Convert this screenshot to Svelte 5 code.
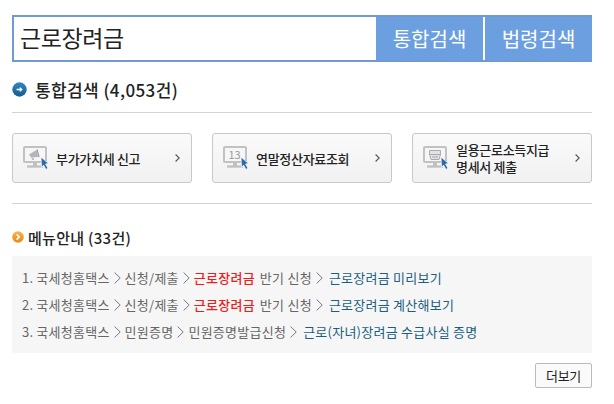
<script lang="ts">
	const shortcuts = [
		{ lines: ['부가가치세 신고'], icon: 'horn' },
		{ lines: ['연말정산자료조회'], icon: 'num' },
		{ lines: ['일용근로소득지급', '명세서 제출'], icon: 'print' }
	];

	const menus = [
		{ no: 1, path: ['국세청홈택스', '신청/제출'], hit: '근로장려금', rest: '반기 신청', link: '근로장려금 미리보기' },
		{ no: 2, path: ['국세청홈택스', '신청/제출'], hit: '근로장려금', rest: '반기 신청', link: '근로장려금 계산해보기' },
		{ no: 3, path: ['국세청홈택스', '민원증명', '민원증명발급신청'], hit: '', rest: '', link: '근로(자녀)장려금 수급사실 증명' }
	];
</script>

{#snippet sep()}
	<svg class="sep" width="7" height="12" viewBox="0 0 7 12">
		<path d="M.6.5L6.2 6 .6 11.5" fill="none" stroke="#777" stroke-width="1" />
	</svg>
{/snippet}

<div class="page">
	<div class="search">
		<div class="query">근로장려금</div>
		<button class="tab first">통합검색</button>
		<button class="tab">법령검색</button>
	</div>

	<h2 class="title">
		<svg width="15" height="15" viewBox="0 0 15 15">
			<defs>
				<linearGradient id="blue" x1="0" y1="0" x2="0" y2="1">
					<stop offset="0" stop-color="#2f88c4" />
					<stop offset="1" stop-color="#18598f" />
				</linearGradient>
			</defs>
			<circle cx="7.5" cy="7.5" r="7.2" fill="url(#blue)" />
			<path d="M4.6 7.5h5.2M7.8 5.6l2 1.9-2 1.9" fill="none" stroke="#fff" stroke-width="1.3" />
		</svg>
		통합검색 (4,053건)
	</h2>
	<hr />

	<div class="shortcuts">
		{#each shortcuts as s}
			<div class="shortcut">
				<svg class="monitor" width="27" height="24" viewBox="0 0 27 24">
					<rect x="1" y="1" width="22" height="15" rx="1" fill="#f6f6f6" stroke="#c2c2c2" stroke-width="2" />
					<path d="M12 17v3" stroke="#c2c2c2" stroke-width="4" fill="none" />
					<path d="M4 20.5h16" stroke="#c2c2c2" stroke-width="2.4" fill="none" />
					{#if s.icon === 'horn'}
						<path d="M6 8.5l7.5-4.5 1.5 7-7 .5z" fill="#b4b4b4" />
						<path d="M8.5 12l.8 2h1.8l-.8-2.2z" fill="#b4b4b4" />
						<path d="M14 3.5l2 7.5" stroke="#9c9c9c" stroke-width="1.2" />
					{:else if s.icon === 'num'}
						<text x="5.5" y="13" class="num">13</text>
					{:else}
						<path d="M6.5 4.5h11v4l-1.5 5h-8l-1.5-5z" fill="#e2e2e2" stroke="#ababab" />
						<path d="M6.5 8.5h11M9 11h6" stroke="#ababab" fill="none" />
					{/if}
					<path d="M18 11l7.6 6.6-3 .4 2.4 4.2-2 1.2-2.5-4.3-2 2.2z" fill="#2e6aa8" stroke="#fff" stroke-width="0.7" />
				</svg>
				<span class="label">
					{#each s.lines as line}<span class="line">{line}</span>{/each}
				</span>
				<svg class="chev" width="5" height="8" viewBox="0 0 5 8">
					<path d="M.6.5L4.2 4 .6 7.5" fill="none" stroke="#555" stroke-width="1.1" />
				</svg>
			</div>
		{/each}
	</div>
	<hr />

	<h3 class="subtitle">
		<svg width="12" height="12" viewBox="0 0 12 12">
			<defs>
				<linearGradient id="orange" x1="0" y1="0" x2="0" y2="1">
					<stop offset="0" stop-color="#f8b650" />
					<stop offset="1" stop-color="#e58a12" />
				</linearGradient>
			</defs>
			<circle cx="6" cy="6" r="5.8" fill="url(#orange)" />
			<path d="M4.6 3.4L7.2 6 4.6 8.6" fill="none" stroke="#fff" stroke-width="1.5" />
		</svg>
		메뉴안내 (33건)
	</h3>
	<ul class="menus">
		{#each menus as m}
			<li>
				<span class="no">{m.no}.</span>
				{#each m.path as p}<span>{p}</span>{@render sep()}{/each}
				{#if m.hit}<b>{m.hit}</b><span class="rest">{m.rest}</span>{@render sep()}{/if}
				<a href="#top">{m.link}</a>
			</li>
		{/each}
	</ul>

	<div class="more-row"><button class="more">더보기</button></div>
</div>

<style>
	:global(body) {
		margin: 0;
		background: #fff;
	}

	.page {
		box-sizing: border-box;
		width: 614px;
		height: 404px;
		padding: 15px 22px 0 12px;
		overflow: hidden;
		font-family: "Noto Sans CJK KR", "Noto Sans", sans-serif;
	}

	.search {
		display: flex;
		height: 47px;
		box-sizing: border-box;
		background: #6b9fe0;
		border: 2px solid #6f9bd0;
		border-right-color: #6b9fe0;
	}

	.query {
		width: 362px;
		box-sizing: border-box;
		background: #fff;
		padding-left: 6px;
		font-size: 23px;
		letter-spacing: -0.4px;
		line-height: 41px;
		color: #222;
	}

	.tab {
		flex: 1;
		padding: 0;
		border: 0;
		background: transparent;
		color: #fff;
		font: inherit;
		font-size: 20px;
		line-height: 42px;
	}

	.tab.first {
		flex: 0 0 107px;
	}

	.tab + .tab {
		padding-left: 2px;
		border-left: 2px solid #fff;
	}

	.title {
		display: flex;
		align-items: center;
		gap: 8px;
		margin: 14px 0 10px;
		height: 26px;
		font-size: 17px;
		font-weight: 500;
		letter-spacing: 0.4px;
		color: #222;
	}

	hr {
		margin: 0;
		border: 0;
		border-top: 1px solid #d3d3d3;
	}

	.shortcuts {
		display: flex;
		gap: 20px;
		margin: 20px 0;
	}

	.shortcut {
		flex: 1;
		display: flex;
		align-items: center;
		height: 50px;
		box-sizing: border-box;
		padding: 0 11px 0 10px;
		border: 1px solid #c8c8c8;
		border-radius: 3px;
		background: linear-gradient(#fafafa, #f1f1f1);
	}

	.monitor {
		flex-shrink: 0;
	}

	.num {
		font-size: 11px;
		fill: #999;
	}

	.label {
		flex: 1;
		margin-left: 6px;
		font-size: 13px;
		font-weight: 500;
		letter-spacing: -0.3px;
		line-height: 17px;
		color: #222;
	}

	.line {
		display: block;
	}

	.subtitle {
		display: flex;
		align-items: center;
		gap: 4px;
		margin: 23px 0 9px;
		height: 20px;
		font-size: 15px;
		font-weight: 500;
		letter-spacing: 0.3px;
		color: #222;
	}

	.menus {
		margin: 0;
		padding: 8px 10px 0;
		height: 97px;
		box-sizing: border-box;
		list-style: none;
		background: #f6f6f6;
		font-size: 13px;
		letter-spacing: 0.25px;
		line-height: 27px;
		color: #666;
	}

	.menus li {
		display: flex;
		align-items: center;
		gap: 4px;
	}

	.no {
		margin-right: -1px;
	}

	.sep {
		flex-shrink: 0;
	}

	.menus b {
		color: #f01c1c;
		font-weight: 500;
	}

	.rest {
		margin-left: 1px;
	}

	.menus a {
		margin-left: 2px;
		color: #1a5f7f;
		text-decoration: none;
	}

	.more-row {
		display: flex;
		justify-content: flex-end;
		margin-top: 10px;
	}

	.more {
		width: 57px;
		height: 25px;
		padding: 0;
		border: 1px solid #bbb;
		border-radius: 2px;
		background: #fafafa;
		font: inherit;
		font-size: 13px;
		letter-spacing: -0.3px;
		color: #222;
	}
</style>
